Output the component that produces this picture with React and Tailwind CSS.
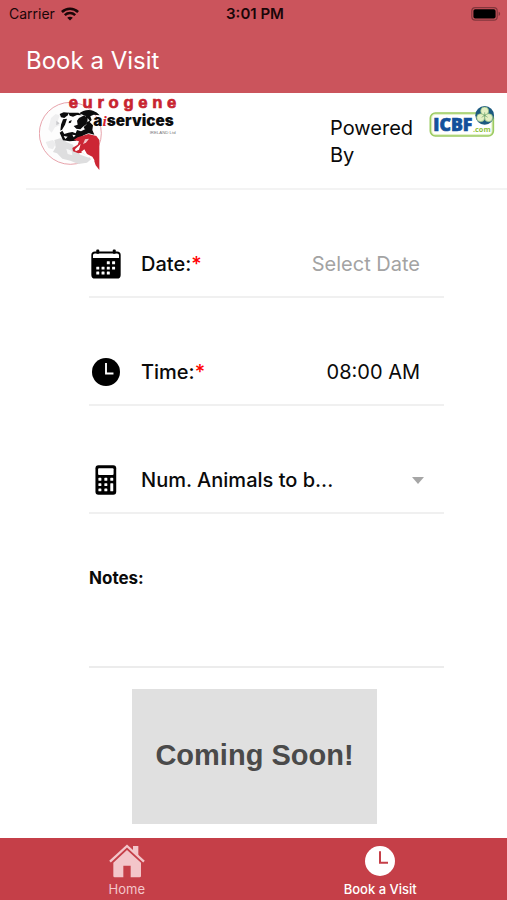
import React, { useState } from 'react';

function WifiIcon() {
  return (
    <svg width="18" height="14" viewBox="0 0 18 14" fill="none" stroke="#1a0608" strokeWidth="2.5" aria-hidden="true">
      <path d="M0.9 5C5.4 0.5 12.6 0.5 17.1 5" />
      <path d="M3.8 8.2C6.8 5.4 11.2 5.4 14.2 8.2" />
      <path d="M9 13.4L6.2 10.7C7.8 9.3 10.2 9.3 11.8 10.7Z" fill="#1a0608" stroke="none" />
    </svg>
  );
}

function BatteryIcon() {
  return (
    <svg width="30" height="14" viewBox="0 0 30 14" aria-hidden="true">
      <rect x="0.8" y="0.7" width="25.4" height="12.4" rx="3.4" fill="none" stroke="#83363c" strokeWidth="1.2" />
      <rect x="2.4" y="2.3" width="22.2" height="9.2" rx="1.8" fill="#000" />
      <path d="M27.6 4.8C29.6 5.4 29.6 8.4 27.6 9Z" fill="#83363c" />
    </svg>
  );
}

function CalendarIcon() {
  const dots = [
    [80, 79], [96, 79],
    [48, 95], [64, 95], [80, 95], [96, 95],
    [48, 110], [64, 110], [80, 110],
  ];
  return (
    <svg width="30" height="30" viewBox="32 42 91 90" aria-hidden="true">
      <rect x="33" y="49" width="89" height="82" rx="11" fill="#000" />
      <path d="M38 69V60Q38 55 44 55H111Q117 55 117 60V69Z" fill="#fff" />
      <rect x="48" y="43" width="9" height="13" rx="3" fill="#000" />
      <rect x="98" y="43" width="9" height="13" rx="3" fill="#000" />
      {dots.map(([x, y]) => (
        <rect key={`${x}-${y}`} x={x} y={y} width="9" height="9" rx="1" fill="#fff" />
      ))}
    </svg>
  );
}

function ClockIcon({ size, face, hands }) {
  return (
    <svg width={size} height={size} viewBox="0 0 90 90" aria-hidden="true">
      <circle cx="45" cy="45" r="45" fill={face} />
      <path d="M45 16V50H69" fill="none" stroke={hands} strokeWidth="6" />
    </svg>
  );
}

function CalculatorIcon() {
  return (
    <svg width="22" height="30" viewBox="44 357 66 91" aria-hidden="true">
      <rect x="45" y="358" width="63" height="89" rx="9" fill="#000" />
      <rect x="53" y="367" width="47" height="20" rx="3" fill="#fff" />
      {[396, 412, 428].map((y) => (
        <g key={y} fill="#fff">
          <rect x="54" y={y} width="9" height="9" rx="2" />
          <rect x="72" y={y} width="9" height="9" rx="2" />
        </g>
      ))}
      <rect x="90" y="396" width="9" height="9" rx="2" fill="#fff" />
      <rect x="90" y="412" width="9" height="25" rx="2" fill="#fff" />
    </svg>
  );
}

function HomeIcon() {
  return (
    <svg width="36" height="34" viewBox="150 42 108 102" aria-hidden="true">
      <path d="M222 48H238V78L222 62Z" fill="#f3c6ca" />
      <path d="M153 95L204 48L255 95" fill="none" stroke="#f3c6ca" strokeWidth="7" />
      <path d="M163 98L204 60L246 98V138Q246 142 242 142H215V107H193V142H167Q163 142 163 138Z" fill="#f3c6ca" />
    </svg>
  );
}

function EurogeneLogo() {
  return (
    <svg width="146" height="77" viewBox="42 9 438 231" role="img" aria-label="Eurogene AI Services">
      <circle cx="136" cy="130" r="93" fill="#fdfdfd" stroke="#e2909a" strokeWidth="2.5" />
      {/* shaded head behind the herd */}
      <path d="M78 84L92 72L104 76L98 96L104 106L90 112L80 128L70 118Z" fill="#efeff0" />
      <path d="M94 92L104 100L94 106Z" fill="#c9c9cc" />
      <path d="M88 150L108 144L124 156L144 164L150 182L166 194L200 206L186 218L160 222L136 212L112 206L96 190L84 186L92 172Z" fill="#dededf" />
      <path d="M62 156L84 150L92 162L84 178L70 174Z" fill="#ececed" />
      <path d="M124 176L140 182L142 196L128 192Z" fill="#f7f7f7" />
      {/* rear black cow */}
      <path d="M160 72Q180 56 204 62Q216 65 224 76L206 74L196 79L200 90L194 96L204 106L202 120L208 134L186 128L176 112L184 98L180 80Z" fill="#0c0c0d" />
      <path d="M188 84L194 92L187 96Z" fill="#fff" />
      {/* pied cow */}
      <path d="M106 70L128 66L158 68L182 78L184 104L168 116L160 134L142 150L116 150L108 128L112 104Z" fill="#fff" />
      <path d="M104 72L116 67L132 68L128 76L118 84L108 82Z" fill="#0c0c0d" />
      <path d="M130 68L160 68L170 76L156 75L144 80L134 77Z" fill="#0c0c0d" />
      <path d="M114 88L126 86L120 104L112 118L106 122L108 104Z" fill="#0c0c0d" />
      <path d="M132 94L140 90L138 98L131 100Z" fill="#0c0c0d" />
      <path d="M162 84L178 76L186 84L185 102L174 110L166 118L154 116L146 108L158 104L156 92Z" fill="#0c0c0d" />
      <path d="M104 128L112 122L118 132L130 128L142 126L152 130L156 120L168 124L180 118L194 128L176 136L164 144L152 152L134 154L114 151Z" fill="#0c0c0d" />
      <path d="M116 138L128 140L121 147Z" fill="#fff" />
      <path d="M142 134L152 136L146 142Z" fill="#fff" />
      {/* red cow */}
      <path d="M158 142L178 136L190 132L214 138L223 150V240L212 226L206 208L188 198L172 188L160 190L144 184L142 174L158 164L162 154L146 150Z" fill="#cc2634" />
      <path d="M150 178L158 170L167 162L162 179L152 184Z" fill="#fff" />
      <path d="M180 148L192 146L184 157L174 163Z" fill="#f2c4c8" />
      <path d="M168 186L178 178L186 192L202 200L210 214L206 210L188 200Z" fill="#fff" />
      <text x="131" y="53" className="font-['Liberation_Sans'] text-[50px] font-bold tracking-[14px]" fill="#c8232f" stroke="#c8232f" strokeWidth="2">eurogene</text>
      <text x="205" y="109" className="font-['Inter'] text-[46px] font-black" fill="#0c0c0d">
        a<tspan className="font-['Liberation_Serif'] italic" fill="#d8232f">i</tspan>services
      </text>
      <text x="374" y="133" className="font-['Liberation_Sans'] text-[13px]" fill="#77777a">IRELAND Ltd</text>
    </svg>
  );
}

function IcbfLogo() {
  return (
    <svg width="66" height="32" viewBox="358 44 198 96" role="img" aria-label="ICBF.com">
      <rect x="362" y="68" width="189" height="69" rx="15" fill="#e4f1cb" stroke="#9ccb62" strokeWidth="5" />
      <rect x="368" y="74" width="177" height="57" rx="9" fill="#fff" />
      <text x="371" y="123" className="font-['Open_Sans'] text-[53px] font-extrabold" fill="#14509b" stroke="#14509b" strokeWidth="2">ICBF</text>
      <text x="490" y="125" className="font-['Open_Sans'] text-[22px] font-bold" fill="#8fbf3c">.com</text>
      <circle cx="525" cy="75" r="28" fill="#1c5a80" />
      <g fill="#e3efc4" stroke="#86b878" strokeWidth="2">
        <circle cx="525" cy="62" r="12" />
        <circle cx="513" cy="82" r="12" />
        <circle cx="537" cy="82" r="12" />
      </g>
      <path d="M525 66V75L516 81M525 75L534 81" fill="none" stroke="#6fa56c" strokeWidth="2" />
    </svg>
  );
}

function FormRow({ icon, label, htmlFor, required, children }) {
  return (
    <div className="flex h-[108px] items-center border-b-2 border-[#f0f0f0] pt-[42px] pr-6">
      <span className="flex w-[34px] shrink-0 justify-center">{icon}</span>
      <label htmlFor={htmlFor} className="ml-[18px] shrink-0 text-xl font-medium whitespace-nowrap">
        {label}
        {required && <span className="text-[#ff0000]">*</span>}
      </label>
      {children}
    </div>
  );
}

export default function App() {
  const [date, setDate] = useState('');
  const [time, setTime] = useState('08:00 AM');
  const [notes, setNotes] = useState('');

  return (
    <div className="flex min-h-screen flex-col bg-white font-['Inter',sans-serif] text-[#0a0a0a]">
      <header className="bg-[#cb545c]">
        <div className="grid h-7 grid-cols-3 items-center pr-1.5 pl-[9px] text-sm text-[#1a0608]">
          <span className="flex items-center gap-1.5">Carrier <WifiIcon /></span>
          <span className="text-center text-[15px] font-semibold">3:01 PM</span>
          <span className="flex justify-end"><BatteryIcon /></span>
        </div>
        <h1 className="flex h-[65px] items-center px-[26px] text-2xl text-white">Book a Visit</h1>
      </header>

      <section className="ml-[26px] flex h-[97px] items-start border-b-2 border-[#f3f3f3] pr-3 pl-[13px]">
        <div className="shrink-0"><EurogeneLogo /></div>
        <p className="mt-[22px] mr-3 ml-auto w-[87px] text-xl leading-[27px]">Powered By</p>
        <div className="mt-3 shrink-0"><IcbfLogo /></div>
      </section>

      <main className="flex flex-col pr-[63px] pl-[89px]">
        <FormRow icon={<CalendarIcon />} label="Date:" htmlFor="date" required>
          <input
            id="date"
            type="text"
            value={date}
            onChange={(e) => setDate(e.target.value)}
            placeholder="Select Date"
            className="ml-auto w-full min-w-0 bg-transparent text-right text-xl outline-none placeholder:text-[#a3a3a3]"
          />
        </FormRow>
        <FormRow icon={<ClockIcon size={28} face="#000" hands="#fff" />} label="Time:" htmlFor="time" required>
          <input
            id="time"
            type="text"
            value={time}
            onChange={(e) => setTime(e.target.value)}
            className="ml-auto w-full min-w-0 bg-transparent text-right text-xl outline-none"
          />
        </FormRow>
        <FormRow icon={<CalculatorIcon />} label="Num. Animals to b..." htmlFor="animals">
          <div className="relative ml-auto flex w-16 items-center">
            <select id="animals" defaultValue="" className="w-full appearance-none bg-transparent text-xl outline-none">
              <option value=""></option>
            </select>
            <svg width="12" height="7" viewBox="0 0 12 7" className="pointer-events-none absolute -right-1" aria-hidden="true">
              <path d="M0 0H12L6 7Z" fill="#a6a6a6" />
            </svg>
          </div>
        </FormRow>

        <div className="flex h-[154px] flex-col border-b-2 border-[#ececec] pt-[52px]">
          <label htmlFor="notes" className="text-[17px] leading-6 font-bold">Notes:</label>
          <textarea
            id="notes"
            value={notes}
            onChange={(e) => setNotes(e.target.value)}
            className="min-h-0 w-full flex-1 resize-none bg-transparent text-base outline-none"
          />
        </div>

        <div className="mt-[21px] mr-[67px] mb-[14px] ml-[43px] flex h-[135px] items-center justify-center bg-[#e0e0e0] pb-0.5 font-['Liberation_Sans',sans-serif] text-[29px] font-bold text-[#4a4a4a]">
          Coming Soon!
        </div>
      </main>

      <nav className="mt-auto grid h-[62px] grid-cols-2 bg-[#c53f48] text-[13px] leading-4">
        <a href="#home" className="flex flex-col items-center justify-between pt-1.5 pb-[3px] text-[#f3c6ca]">
          <HomeIcon />
          Home
        </a>
        <a href="#book" aria-current="page" className="flex flex-col items-center justify-between pt-2 pb-[3px] font-medium text-white">
          <ClockIcon size={30} face="#fff" hands="#c53f48" />
          Book a Visit
        </a>
      </nav>
    </div>
  );
}
